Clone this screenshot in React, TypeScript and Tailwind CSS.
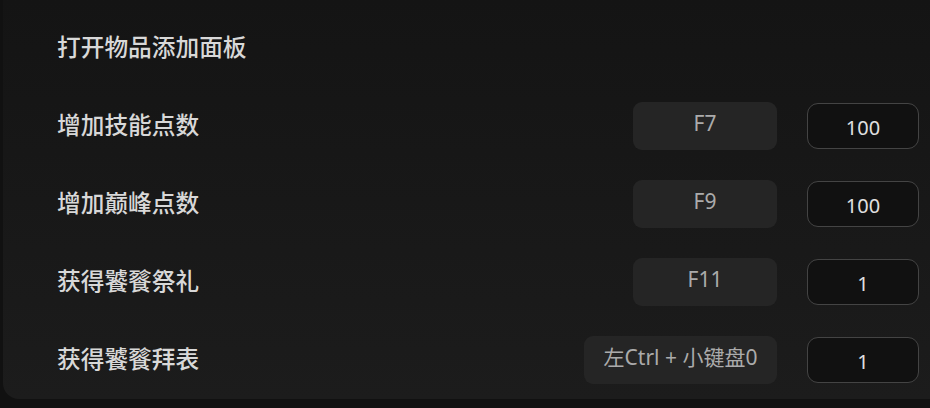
import React from "react";

const rows = [
  { label: "增加技能点数", key: "F7", value: "100", wide: false },
  { label: "增加巅峰点数", key: "F9", value: "100", wide: false },
  { label: "获得饕餮祭礼", key: "F11", value: "1", wide: false },
  { label: "获得饕餮拜表", key: "左Ctrl + 小键盘0", value: "1", wide: true },
];

export default function App() {
  return (
    <div
      className="w-[930px] h-[408px] bg-[#111111] pl-[3px] pb-[9px] flex overflow-hidden"
      style={{ fontFamily: '"Noto Sans", "Noto Sans CJK SC", sans-serif' }}
    >
      <div className="flex-1 rounded-bl-[16px] bg-gradient-to-b from-[#141414] to-[#1c1c1c] pt-[9px] pl-[54px] pr-[11px] flex flex-col">
        <div className="h-[78px] flex items-center">
          <span className="text-[23.7px] font-medium text-[#d8d8d8]">打开物品添加面板</span>
        </div>
        {rows.map((r) => (
          <div key={r.label} className="h-[78px] flex items-center">
            <span className="text-[23.7px] font-medium text-[#d8d8d8] flex-1">{r.label}</span>
            <div
              className={`h-[48px] ${r.wide ? "w-[193px]" : "w-[144px]"} rounded-[9px] bg-[#252525] flex items-center justify-center pb-[4px] text-[21px] text-[#ababab]`}
            >
              {r.key}
            </div>
            <div className="ml-[30px] w-[112px] h-[46px] rounded-[11px] border-[1.5px] border-[#444444] bg-[#111111] flex items-center justify-center pt-[3px] text-[20px] text-[#e0e0e0]">
              {r.value}
            </div>
          </div>
        ))}
      </div>
    </div>
  );
}
